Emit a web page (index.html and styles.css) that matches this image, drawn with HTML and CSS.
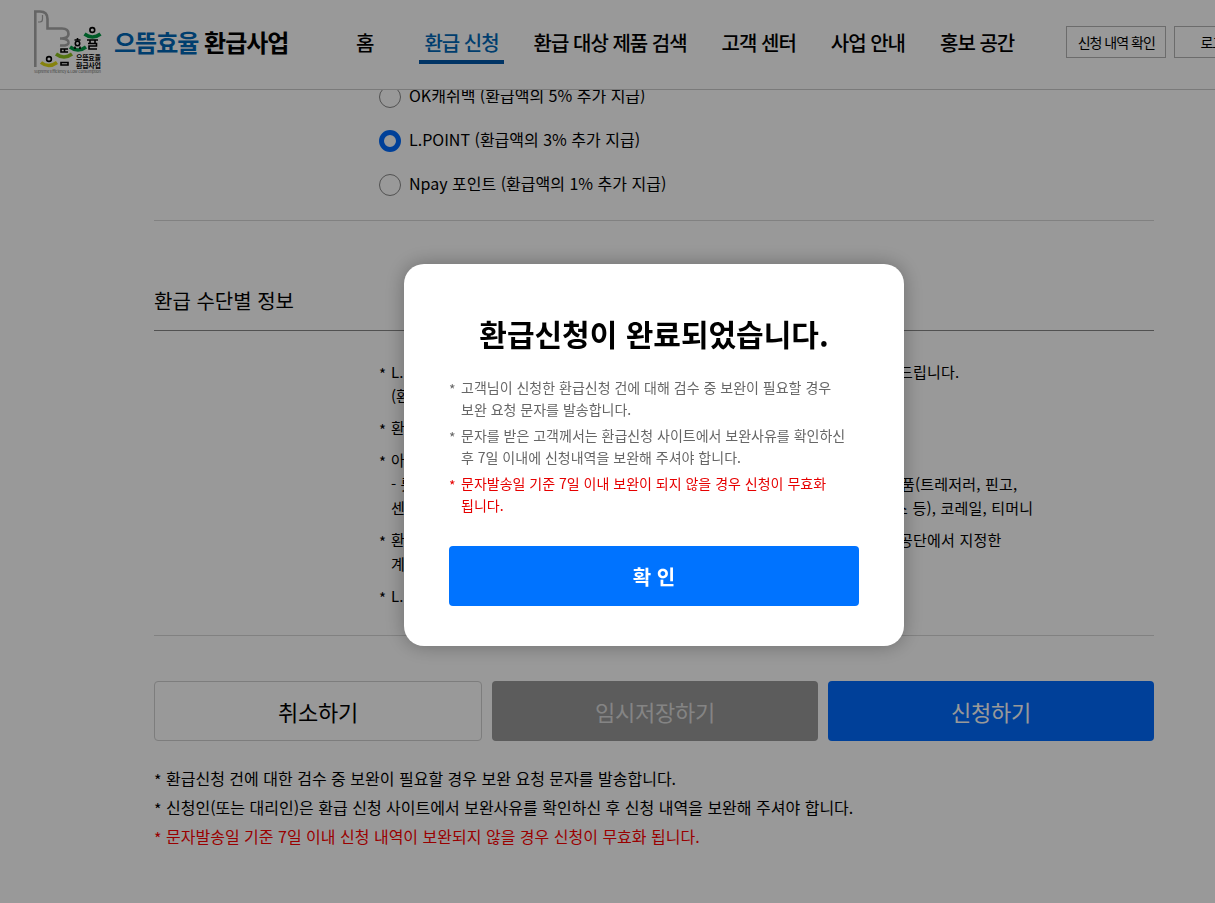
FILE: index.html
```html
<!DOCTYPE html>
<html lang="ko">
<head>
    <meta charset="UTF-8">
    <meta name="viewport" content="width=device-width, initial-scale=1.0">
    <title>으뜸효율 환급사업</title>
    <link rel="stylesheet" href="styles.css">
</head>
<body>
    <header class="header">
        <a href="#" class="logo">
            <svg class="logo-mark" width="70" height="66" viewBox="0 0 70 66">
                <g fill="none" stroke="#a8a8a8" stroke-width="2.600">
                    <path d="M2.300 58V2.500H7Q14.500 2.500 14.500 10V19.500H29Q35.500 19.500 35.500 25Q35.500 29 29 29.500H27M29 29.500Q36 30 35.500 34Q35 37 27 36.500"/>
                    <path d="M5 13H7Q9.500 13 9.500 10V6" stroke-width="1.200"/>
                </g>
                <g fill="none" stroke-width="3.500">
                    <path d="M8 53.500Q15.500 59.500 24 53.500" stroke="#e0db18"/>
                    <path d="M23 45Q31 51 39 45" stroke="#8dc21f"/>
                    <path d="M37 38Q45 44 53 38" stroke="#009944"/>
                    <path d="M51.500 25Q59.500 31 67.500 25" stroke="#009944"/>
                </g>
                <g fill="none" stroke="#000" stroke-width="1.600">
                    <circle cx="16" cy="50" r="2.400"/>
                    <circle cx="59.300" cy="21" r="2.400"/>
                    <circle cx="44.500" cy="34.500" r="2.200"/>
                    <path d="M41.500 31H47.500M44.500 29V31M42 37.500V40M47 37.500V40"/>
                    <path d="M35 40H28V43H35M31.500 40V43M28 53.500H35V56H28Z"/>
                    <path d="M54 31H65M57 31V34M62 31V34M55 34.500H63.500V37H56V40H64"/>
                </g>
                <text class="logo-name" x="43" y="51" textLength="25">으뜸효율</text>
                <text class="logo-name" x="43" y="59" textLength="25">환급사업</text>
                <text class="logo-sub" x="1" y="64" textLength="67">Supreme Efficiency &amp; Low Consumption</text>
            </svg>
            <span class="logo-text"><em>으뜸효율</em> 환급사업</span>
        </a>
        <nav class="nav">
            <a href="#">홈</a>
            <a href="#" class="active">환급 신청</a>
            <a href="#">환급 대상 제품 검색</a>
            <a href="#">고객 센터</a>
            <a href="#">사업 안내</a>
            <a href="#">홍보 공간</a>
        </nav>
        <div class="util">
            <a href="#">신청 내역 확인</a>
            <a href="#" class="login">로그인</a>
        </div>
    </header>

    <main class="container">
        <div class="radio-list">
            <label><input type="radio" name="point"><span>OK캐쉬백 (환급액의 5% 추가 지급)</span></label>
            <label><input type="radio" name="point" checked><span>L.POINT (환급액의 3% 추가 지급)</span></label>
            <label><input type="radio" name="point"><span>Npay 포인트 (환급액의 1% 추가 지급)</span></label>
        </div>

        <h3 class="section-title">환급 수단별 정보</h3>
        <ul class="info-list">
            <li>
                <p class="row"><span>L.P</span><span class="rest">드립니다.</span></p>
                <p>(환급</p>
            </li>
            <li><p>환급</p></li>
            <li>
                <p>아래</p>
                <p class="row"><span>- 롯데</span><span class="rest rest-goods">품(트레저러, 핀고,</span></p>
                <p class="row"><span>센골드</span><span class="rest rest-bus">스 등), 코레일, 티머니</span></p>
            </li>
            <li>
                <p class="row"><span>환급</span><span class="rest">공단에서 지정한</span></p>
                <p>계좌</p>
            </li>
            <li><p>L.P</p></li>
        </ul>

        <div class="btn-group">
            <button type="button" class="btn btn-cancel">취소하기</button>
            <button type="button" class="btn btn-save">임시저장하기</button>
            <button type="button" class="btn btn-submit">신청하기</button>
        </div>

        <ul class="notice">
            <li>환급신청 건에 대한 검수 중 보완이 필요할 경우 보완 요청 문자를 발송합니다.</li>
            <li>신청인(또는 대리인)은 환급 신청 사이트에서 보완사유를 확인하신 후 신청 내역을 보완해 주셔야 합니다.</li>
            <li class="red">문자발송일 기준 7일 이내 신청 내역이 보완되지 않을 경우 신청이 무효화 됩니다.</li>
        </ul>
    </main>

    <!-- 신청 완료 팝업 -->
    <div class="dim">
        <div class="popup">
            <h2>환급신청이 완료되었습니다.</h2>
            <ul>
                <li>고객님이 신청한 환급신청 건에 대해 검수 중 보완이 필요할 경우<br>보완 요청 문자를 발송합니다.</li>
                <li>문자를 받은 고객께서는 환급신청 사이트에서 보완사유를 확인하신<br>후 7일 이내에 신청내역을 보완해 주셔야 합니다.</li>
                <li class="red">문자발송일 기준 7일 이내 보완이 되지 않을 경우 신청이 무효화<br>됩니다.</li>
            </ul>
            <button type="button" class="btn-ok">확 인</button>
        </div>
    </div>
</body>
</html>
```
FILE: styles.css
```css
* {
    box-sizing: border-box;
    margin: 0;
    padding: 0;
}

body {
    height: 903px;
    overflow: hidden;
    font-family: "Noto Sans CJK KR", sans-serif;
    font-size: 15px;
    color: #000;
    background: #fff;
}

ul {
    list-style: none;
}

a {
    color: inherit;
    text-decoration: none;
}

button {
    font-family: inherit;
    border: 0;
    cursor: pointer;
}

/* header */
.header {
    position: relative;
    z-index: 10;
    display: flex;
    align-items: center;
    height: 90px;
    padding-left: 33px;
    background: #fff;
    border-bottom: 1px solid #ccc;
    white-space: nowrap;
}

.logo {
    display: flex;
    flex: none;
    align-items: center;
    width: 323px;
    padding-bottom: 5px;
}

.logo-mark {
    flex: none;
    margin: -1px 11px 0 0;
}

.logo-name {
    font-size: 7px;
    font-weight: 700;
}

.logo-sub {
    font-size: 4px;
    fill: #777;
}

.logo-text {
    margin-top: -2px;
    font-size: 24px;
    font-weight: 700;
    letter-spacing: -1px;
}

.logo-text em {
    font-style: normal;
    color: #0068b7;
}

.nav {
    display: flex;
    flex: none;
    gap: 35px;
    font-size: 20px;
    font-weight: 500;
    letter-spacing: -1px;
}

.nav a {
    height: 44px;
    line-height: 46px;
    margin-top: -6px;
}

.nav .active {
    position: relative;
    margin-left: 16px;
    color: #0068b7;
}

.nav .active::after {
    content: "";
    position: absolute;
    left: -5px;
    right: -5px;
    bottom: 0;
    height: 4px;
    background: #0057a8;
}

.util {
    display: flex;
    flex: none;
    gap: 8px;
    margin-left: 52px;
    margin-top: -6px;
    font-size: 14px;
    letter-spacing: -1px;
}

.util a {
    width: 100px;
    height: 32px;
    line-height: 30px;
    flex: none;
    text-align: center;
    border: 1px solid #b5b5b5;
}

.util .login {
    width: 88px;
}

/* content */
.container {
    width: 1000px;
    margin: -15px 0 0 154px;
}

.radio-list {
    height: 146px;
    padding-left: 225px;
    border-bottom: 1px solid #d8d8d8;
}

.radio-list label {
    display: flex;
    align-items: center;
    height: 44px;
    font-size: 16px;
}

.radio-list span {
    margin-top: -4px;
}

.radio-list input {
    appearance: none;
    width: 22px;
    height: 22px;
    margin-right: 8px;
    border: 1px solid #888;
    border-radius: 50%;
}

.radio-list input:checked {
    border: 5px solid #006cff;
}

.section-title {
    height: 110px;
    padding-top: 64px;
    line-height: 32px;
    font-size: 20px;
    font-weight: 400;
    border-bottom: 1px solid #888;
}

.info-list {
    height: 305px;
    padding: 29px 0 0 225px;
    border-bottom: 1px solid #d8d8d8;
}

.info-list li {
    position: relative;
    margin-bottom: 8px;
    padding-left: 12px;
    line-height: 24px;
}

.info-list li::before,
.notice li::before,
.popup li::before {
    content: "*";
    position: absolute;
    top: 2px;
    left: 0;
}

.row {
    display: flex;
}

.row span:first-child {
    width: 508px;
}

.row .rest {
    letter-spacing: 0.2px;
}

.row .rest-goods {
    margin-left: 2px;
}

.row .rest-bus {
    margin-left: -5px;
}

.btn-group {
    display: flex;
    gap: 10px;
    margin-top: 45px;
}

.btn {
    flex: 1;
    height: 60px;
    font-size: 22px;
    font-weight: 400;
    letter-spacing: -0.2px;
    border-radius: 4px;
}

.btn-cancel {
    color: #000;
    background: #fff;
    border: 1px solid #d0d0d0;
}

.btn-save {
    color: #ddd;
    background: #999;
}

.btn-submit {
    color: #fff;
    background: #006cff;
}

.notice {
    margin-top: 23px;
    font-size: 16px;
    line-height: 29px;
}

.notice li {
    position: relative;
    padding-left: 12px;
}

.red {
    color: #f00;
}

/* popup */
.dim {
    position: fixed;
    inset: 0;
    z-index: 100;
    display: flex;
    align-items: flex-start;
    padding: 264px 0 0 404px;
    background: rgba(0, 0, 0, 0.4);
}

.popup {
    width: 500px;
    height: 382px;
    padding: 45px 45px 40px;
    background: #fff;
    border-radius: 20px;
    box-shadow: 0 0 20px rgba(0, 0, 0, 0.3);
}

.popup h2 {
    line-height: 48px;
    font-size: 30px;
    font-weight: 700;
    text-align: center;
}

.popup ul {
    height: 171px;
    margin-top: 18px;
    padding-top: 1px;
    font-size: 14px;
    color: #666;
}

.popup li {
    position: relative;
    margin-bottom: 3px;
    padding-left: 12px;
    line-height: 22.400px;
    white-space: nowrap;
}

.popup .red {
    color: #e60000;
}

.btn-ok {
    width: 410px;
    height: 60px;
    font-size: 20px;
    font-weight: 700;
    color: #fff;
    background: #0073ff;
    border-radius: 4px;
}
```
